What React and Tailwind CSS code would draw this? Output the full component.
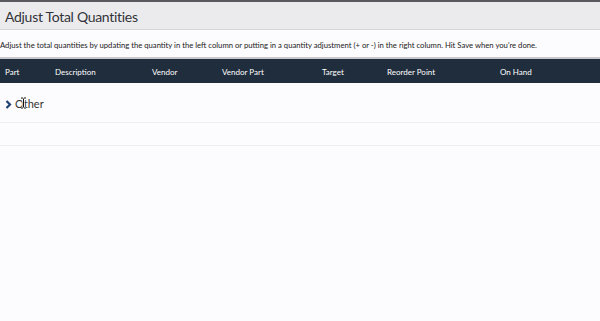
import React from "react";

const cols = [
  { label: "Part", w: "w-[50px]" },
  { label: "Description", w: "w-[97px]" },
  { label: "Vendor", w: "w-[70px]" },
  { label: "Vendor Part", w: "w-[100px]" },
  { label: "Target", w: "w-[65px]" },
  { label: "Reorder Point", w: "w-[113px]" },
  { label: "On Hand", w: "w-[83px]" },
  { label: "", w: "flex-1" },
];

export default function App() {
  return (
    <div className="h-[321px] w-[600px] overflow-hidden bg-[#fcfbfd] font-['Lato',sans-serif]">
      {/* Title bar */}
      <div className="h-[30px] border-t-2 border-b border-t-[#5a5a5e] border-b-[#d6d6da] bg-[#ebebee] px-[5px] pt-[4px] text-[14px] tracking-[-0.3px] text-[#333338]">
        Adjust Total Quantities
      </div>

      {/* Instructions */}
      <div className="h-[29px] border-b-2 border-[#c9c9cd] pt-[10px] text-[7.7px] text-[#222]">
        Adjust the total quantities by updating the quantity in the left column or putting in a quantity adjustment (+ or -) in the right column. Hit Save when you're done.
      </div>

      {/* Table header */}
      <div className="flex h-[24px] items-center bg-[#1f2d3d] pt-[1px] text-[8px] text-white">
        {cols.map((c, i) => (
          <div key={i} className={`${c.w} pl-[5px]`}>
            {c.label}
          </div>
        ))}
      </div>

      {/* Group row */}
      <div className="flex h-[40px] items-center gap-[3px] border-b border-[#efedf1] px-[5px] pt-[3px] text-[11px] text-[#333]">
        <svg width="7" height="9" viewBox="0 0 7 9">
          <path d="M1.5 1 L5 4.5 L1.5 8" fill="none" stroke="#1f4170" strokeWidth="2.2" />
        </svg>
        <span className="relative">
          Other
          <svg className="absolute left-[5px] top-[1px]" width="7" height="12" viewBox="0 0 7 12">
            <path d="M1 1 H3 M4 1 H6 M3.5 1.5 V10.5 M1 11 H3 M4 11 H6" stroke="#fff" strokeWidth="2.2" />
            <path d="M1 1 H3 M4 1 H6 M3.5 1.5 V10.5 M1 11 H3 M4 11 H6" stroke="#111" strokeWidth="1" />
          </svg>
        </span>
      </div>

      {/* Empty row */}
      <div className="h-[23px] border-b border-[#efedf1]"></div>
    </div>
  );
}
